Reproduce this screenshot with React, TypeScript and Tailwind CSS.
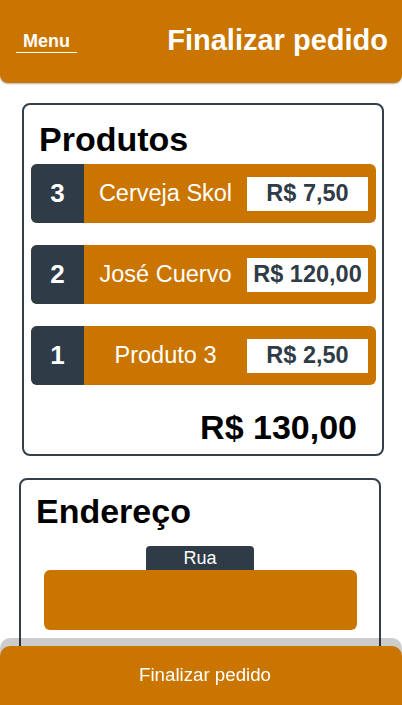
import React from 'react';

const items = [
  { qty: 3, name: 'Cerveja Skol', price: 'R$ 7,50' },
  { qty: 2, name: 'José Cuervo', price: 'R$ 120,00' },
  { qty: 1, name: 'Produto 3', price: 'R$ 2,50' },
];

export default function App() {
  return (
    <div className="min-h-screen bg-white pb-[80px] font-['Liberation_Sans',Arial,sans-serif]">
      {/* Header */}
      <header className="h-[83px] bg-[#c97500] rounded-b-lg shadow-[0_1px_2px_rgba(0,0,0,0.3)] flex items-center justify-between pl-[16px] pr-[14px] pb-[2px]">
        <a className="text-white font-bold text-[18px] leading-none px-[7px] pb-[2px] border-b border-white mt-[4px]">
          Menu
        </a>
        <h1 className="text-white font-bold text-[29px] leading-none">Finalizar pedido</h1>
      </header>

      {/* Produtos */}
      <section className="mt-[20px] ml-[22px] w-[362px] border-2 border-[#333f49] rounded-lg pt-[17px] pb-[10px]">
        <h2 className="text-black font-bold text-[34px] leading-none pl-[15px]">Produtos</h2>
        <div className="mt-[8px] flex flex-col gap-[22px] pl-[7px]">
          {items.map((it) => (
            <div key={it.qty} className="w-[345px] h-[59px] flex rounded-md overflow-hidden bg-[#c97500]">
              <div className="w-[53px] bg-[#2f3b46] flex items-center justify-center text-white font-bold text-[26px]">
                {it.qty}
              </div>
              <div className="flex-1 flex items-center justify-center text-white text-[23.5px]">{it.name}</div>
              <div className="self-center mr-[8px] w-[121px] h-[34px] bg-white flex items-center justify-center text-[#2f3b46] font-bold text-[23.5px]">
                {it.price}
              </div>
            </div>
          ))}
        </div>
        <div className="mt-[25px] pr-[25px] text-right text-black font-bold text-[34px] leading-none">R$ 130,00</div>
      </section>

      {/* Endereço */}
      <section className="mt-[22px] ml-[19px] w-[362px] border-2 border-[#333f49] rounded-lg pt-[14px] pb-[40px]">
        <h2 className="text-black font-bold text-[34px] leading-none pl-[15px]">Endereço</h2>
        <div className="mt-[18px] flex flex-col items-center">
          <div className="w-[108px] h-[24px] bg-[#2f3b46] rounded-t-[4px] flex items-center justify-center text-white text-[18px] leading-none">
            Rua
          </div>
          <div className="w-[313px] h-[60px] bg-[#c97500] rounded-md" />
        </div>
      </section>

      {/* Footer */}
      <footer className="fixed bottom-0 left-0 right-0 h-[59px] bg-[#c97500] rounded-t-[10px] shadow-[0_-8px_0_rgba(0,0,0,0.2)] flex items-center justify-center pl-[8px] text-white text-[18.7px]">
        Finalizar pedido
      </footer>
    </div>
  );
}
